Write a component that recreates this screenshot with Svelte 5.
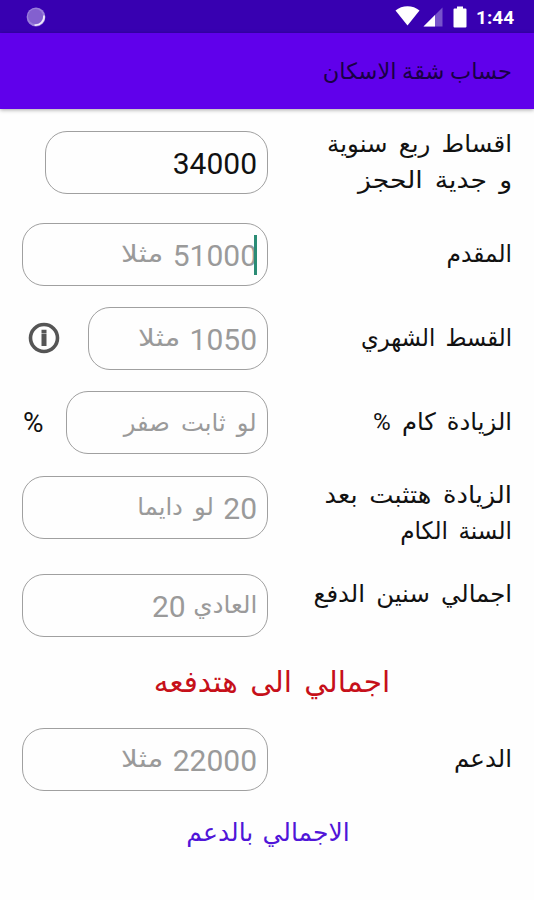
<script>
  const fields = [
    {
      id: 'quarterly',
      label: [
        { text: 'اقساط ربع سنوية', stretch: 1.02 },
        { text: 'و جدية الحجز', stretch: 1.11 }
      ],
      value: '34000',
      size: 'w-223'
    },
    {
      id: 'advance',
      label: [{ text: 'المقدم', stretch: 0.97 }],
      hint: [{ text: '51000' }, { text: 'مثلا', stretch: 1.23 }],
      focused: true
    },
    {
      id: 'monthly',
      label: [{ text: 'القسط الشهري', stretch: 0.945 }],
      hint: [{ text: '1050' }, { text: 'مثلا', stretch: 1.23 }],
      size: 'w-180',
      info: true
    },
    {
      id: 'increase',
      label: [{ text: 'الزيادة كام %', stretch: 1.01 }],
      hint: [{ text: 'لو ثابت صفر', stretch: 1.01 }],
      size: 'w-202',
      unit: '%'
    },
    {
      id: 'fixed-after',
      label: [
        { text: 'الزيادة هتثبت بعد', stretch: 1.07 },
        { text: 'السنة الكام', stretch: 0.965 }
      ],
      hint: [{ text: '20' }, { text: 'لو دايما', stretch: 1.01 }]
    },
    {
      id: 'years',
      label: [{ text: 'اجمالي سنين الدفع', stretch: 1.015 }],
      hint: [{ text: 'العادي', stretch: 1.03 }, { text: '20' }]
    }
  ];

  const support = {
    id: 'support',
    label: [{ text: 'الدعم', stretch: 1.02 }],
    hint: [{ text: '22000' }, { text: 'مثلا', stretch: 1.23 }]
  };

  const isNumber = text => /^\d+$/.test(text);
</script>

{#snippet row(field)}
  <div class="row {field.id}">
    <div class="label">
      {#each field.label as line}
        <span style:--stretch={line.stretch}>{line.text}</span>
      {/each}
    </div>
    <div class="field {field.size || ''}">
      {#if field.value}
        <span class="number">{field.value}</span>
      {:else}
        {#each field.hint as part}
          <span
            class="hint"
            class:number={isNumber(part.text)}
            class:raised={field.hint.length > 1 && !isNumber(part.text)}
            style:--stretch={part.stretch || 1}
          >{part.text}</span>
        {/each}
      {/if}
      {#if field.focused}
        <i class="caret"></i>
      {/if}
    </div>
    {#if field.info}
      <svg class="info" viewBox="0 0 32 32">
        <circle cx="16" cy="16" r="13.5" />
        <path d="M16 7.800v3.200M16 11.400v12.600" />
      </svg>
    {/if}
    {#if field.unit}
      <span class="unit">{field.unit}</span>
    {/if}
  </div>
{/snippet}

<div class="screen" dir="rtl">
  <div class="status" dir="ltr">
    <svg class="sync" viewBox="0 0 20 20">
      <circle cx="10" cy="10" r="9.4" fill="#9a7edb" />
      <circle cx="9.5" cy="9.5" r="7.5" fill="#8360cf" />
      <path d="M18 8.500A8.500 8.500 0 0 1 8.500 18" fill="none" stroke="#efe8fb" stroke-width="1.700" />
    </svg>
    <svg class="wifi" viewBox="0 0 25 20">
      <path d="M0.500 4.500C7-1.200 18-1.200 24.500 4.500L12.500 19.500Z" fill="#fff" />
    </svg>
    <svg class="signal" viewBox="0 0 20 20">
      <path d="M0.500 19.500L19.500 0.500V19.500Z" fill="#7753cb" />
      <path d="M0.500 19.500L12 8V19.500Z" fill="#fff" />
    </svg>
    <svg class="battery" viewBox="0 0 14 22">
      <path d="M4 0.500h6v2h2.500q1 0 1 1v17q0 1-1 1h-11q-1 0-1-1v-17q0-1 1-1H4z" fill="#fff" />
    </svg>
    <span class="clock">1:44</span>
  </div>

  <header>
    <h1>حساب شقة الاسكان</h1>
  </header>

  <main>
    {#each fields as field}
      {@render row(field)}
    {/each}
    <p class="total">اجمالي الى هتدفعه</p>
    {@render row(support)}
    <p class="with-support">الاجمالي بالدعم</p>
  </main>
</div>

<style>
  :global(body) {
    margin: 0;
    background: #fefefe;
  }

  .screen {
    width: 534px;
    height: 900px;
    overflow: hidden;
    background: #fefefe;
    color: #111;
    font-family: Roboto, 'DejaVu Sans', sans-serif;
  }

  .status {
    display: flex;
    align-items: center;
    box-sizing: border-box;
    height: 33px;
    padding: 0 20px 0 26px;
    background: #3800b1;
  }

  .sync {
    width: 20px;
    height: 20px;
    margin-right: auto;
  }

  .wifi {
    width: 25px;
    height: 20px;
    margin-top: -1px;
  }

  .signal {
    width: 20px;
    height: 20px;
    margin: 1px 10px 0 3px;
  }

  .battery {
    width: 14px;
    height: 22px;
  }

  .clock {
    width: 38px;
    margin: 2px 0 0 9px;
    color: #fff;
    font-size: 19px;
    font-weight: 700;
  }

  header {
    display: flex;
    align-items: center;
    box-sizing: border-box;
    height: 76px;
    padding: 0 22px;
    background: #6000eb;
    box-shadow: 0 1px 4px rgba(0, 0, 0, 0.35);
  }

  h1 {
    margin: 0;
    color: #190045;
    font-size: 22.5px;
    font-weight: 400;
  }

  main {
    display: grid;
    grid-template-rows: 100px 84px 84px 84px 86px 110px 44px 110px 36px;
    padding: 3px 22px 0;
  }

  .row {
    display: grid;
    grid-template-columns: 244px 1fr;
    grid-template-rows: 100%;
    align-items: center;
    position: relative;
  }

  .label {
    font-size: 24px;
    line-height: 36px;
    white-space: nowrap;
    word-spacing: 5px;
  }

  .label span {
    display: block;
    transform: scaleX(var(--stretch));
    transform-origin: right;
  }

  .fixed-after .label {
    padding-top: 12px;
  }

  .years .label {
    padding-bottom: 22px;
  }

  .field {
    display: flex;
    align-items: baseline;
    gap: 9px;
    position: relative;
    box-sizing: border-box;
    width: 246px;
    height: 63px;
    padding: 0 10px;
    border: 1.500px solid #a0a0a0;
    border-radius: 22px;
    font-size: 24px;
    line-height: 63px;
    white-space: nowrap;
    word-spacing: 5px;
  }

  .w-223 {
    width: 223px;
  }

  .w-180 {
    width: 180px;
  }

  .w-202 {
    width: 202px;
  }

  .hint {
    color: #9a9a9a;
    transform: scaleX(var(--stretch));
    transform-origin: right;
  }

  .number {
    font-size: 30px;
  }

  .raised {
    transform: translateY(-4px) scaleX(var(--stretch));
  }

  .caret {
    position: absolute;
    top: 11px;
    right: 10px;
    width: 3px;
    height: 40px;
    background: #2b8c75;
  }

  .info {
    position: absolute;
    left: 6px;
    width: 32px;
    height: 32px;
    fill: none;
    stroke: #555;
    stroke-width: 3.600;
  }

  .info path {
    stroke-width: 5;
  }

  .unit {
    position: absolute;
    left: 1px;
    font-size: 28px;
  }

  p {
    margin: 0;
    text-align: center;
    white-space: nowrap;
  }

  .total {
    padding-left: 10px;
    color: #c6101a;
    font-size: 29.5px;
    line-height: 44px;
    word-spacing: 5px;
  }

  .with-support {
    padding-left: 2px;
    color: #5015d8;
    font-size: 25px;
    line-height: 38px;
    word-spacing: 3px;
  }
</style>
